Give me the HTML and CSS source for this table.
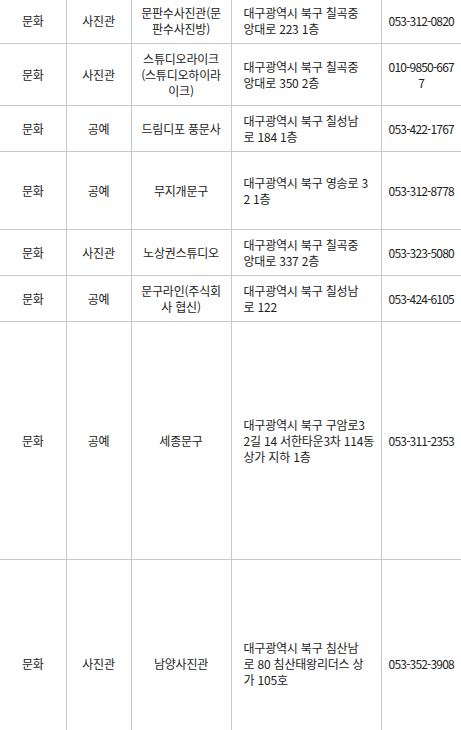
FILE: index.html
```html
<!DOCTYPE html>
<html lang="ko">
<head>
<meta charset="utf-8">
<title>상점 목록</title>
<link rel="stylesheet" href="styles.css">
</head>
<body>
<table class="list">
  <colgroup>
    <col class="c-type">
    <col class="c-cat">
    <col class="c-name">
    <col class="c-addr">
    <col class="c-tel">
  </colgroup>
  <tbody>
    <tr class="r46">
      <td>문화</td><td>사진관</td><td>문판수사진관(문<br>판수사진방)</td>
      <td class="addr">대구광역시 북구 칠곡중<br>앙대로 223 1층</td><td class="tel">053-312-0820</td>
    </tr>
    <tr class="r62">
      <td>문화</td><td>사진관</td><td>스튜디오라이크<br>(스튜디오하이라<br>이크)</td>
      <td class="addr">대구광역시 북구 칠곡중<br>앙대로 350 2층</td><td class="tel">010-9850-667<br>7</td>
    </tr>
    <tr class="r46">
      <td>문화</td><td>공예</td><td>드림디포 풍문사</td>
      <td class="addr">대구광역시 북구 칠성남<br>로 184 1층</td><td class="tel">053-422-1767</td>
    </tr>
    <tr class="r78">
      <td>문화</td><td>공예</td><td>무지개문구</td>
      <td class="addr">대구광역시 북구 영송로 3<br>2 1층</td><td class="tel">053-312-8778</td>
    </tr>
    <tr class="r46">
      <td>문화</td><td>사진관</td><td>노상권스튜디오</td>
      <td class="addr">대구광역시 북구 칠곡중<br>앙대로 337 2층</td><td class="tel">053-323-5080</td>
    </tr>
    <tr class="r46">
      <td>문화</td><td>공예</td><td>문구라인(주식회<br>사 협신)</td>
      <td class="addr">대구광역시 북구 칠성남<br>로 122</td><td class="tel">053-424-6105</td>
    </tr>
    <tr class="r238">
      <td>문화</td><td>공예</td><td>세종문구</td>
      <td class="addr">대구광역시 북구 구암로3<br>2길 14 서한타운3차 114동<br>상가 지하 1층</td><td class="tel">053-311-2353</td>
    </tr>
    <tr class="r208">
      <td>문화</td><td>사진관</td><td>남양사진관</td>
      <td class="addr">대구광역시 북구 침산남<br>로 80 침산태왕리더스 상<br>가 105호</td><td class="tel">053-352-3908</td>
    </tr>
  </tbody>
</table>
</body>
</html>
```

FILE: styles.css
```css
html, body {
  margin: 0;
  padding: 0;
  background: #fff;
}

.list {
  width: 461px;
  table-layout: fixed;
  border-collapse: collapse;
  margin-top: -3px;
  font-family: "Noto Sans CJK KR", "Noto Sans", sans-serif;
  font-size: 12px;
  letter-spacing: -0.2px;
  line-height: 16px;
  color: #222;
}

.c-type { width: 66px; }
.c-cat { width: 65px; }
.c-name { width: 100px; }
.c-addr { width: 150px; }
.c-tel { width: 80px; }

.list td {
  border: 1px solid #c8c8c8;
  padding: 0 4px;
  text-align: center;
  vertical-align: middle;
  white-space: nowrap;
}

.list td:first-child { border-left: 0; }
.list td:last-child { border-right: 0; }

.list td.addr {
  text-align: left;
  padding: 0 4px 0 12px;
}

.list td.tel {
  padding: 0 2px;
  letter-spacing: -0.8px;
}

.r46 { height: 46px; }
.r62 { height: 62px; }
.r78 { height: 78px; }
.r208 { height: 208px; }
.r238 { height: 238px; }
```
